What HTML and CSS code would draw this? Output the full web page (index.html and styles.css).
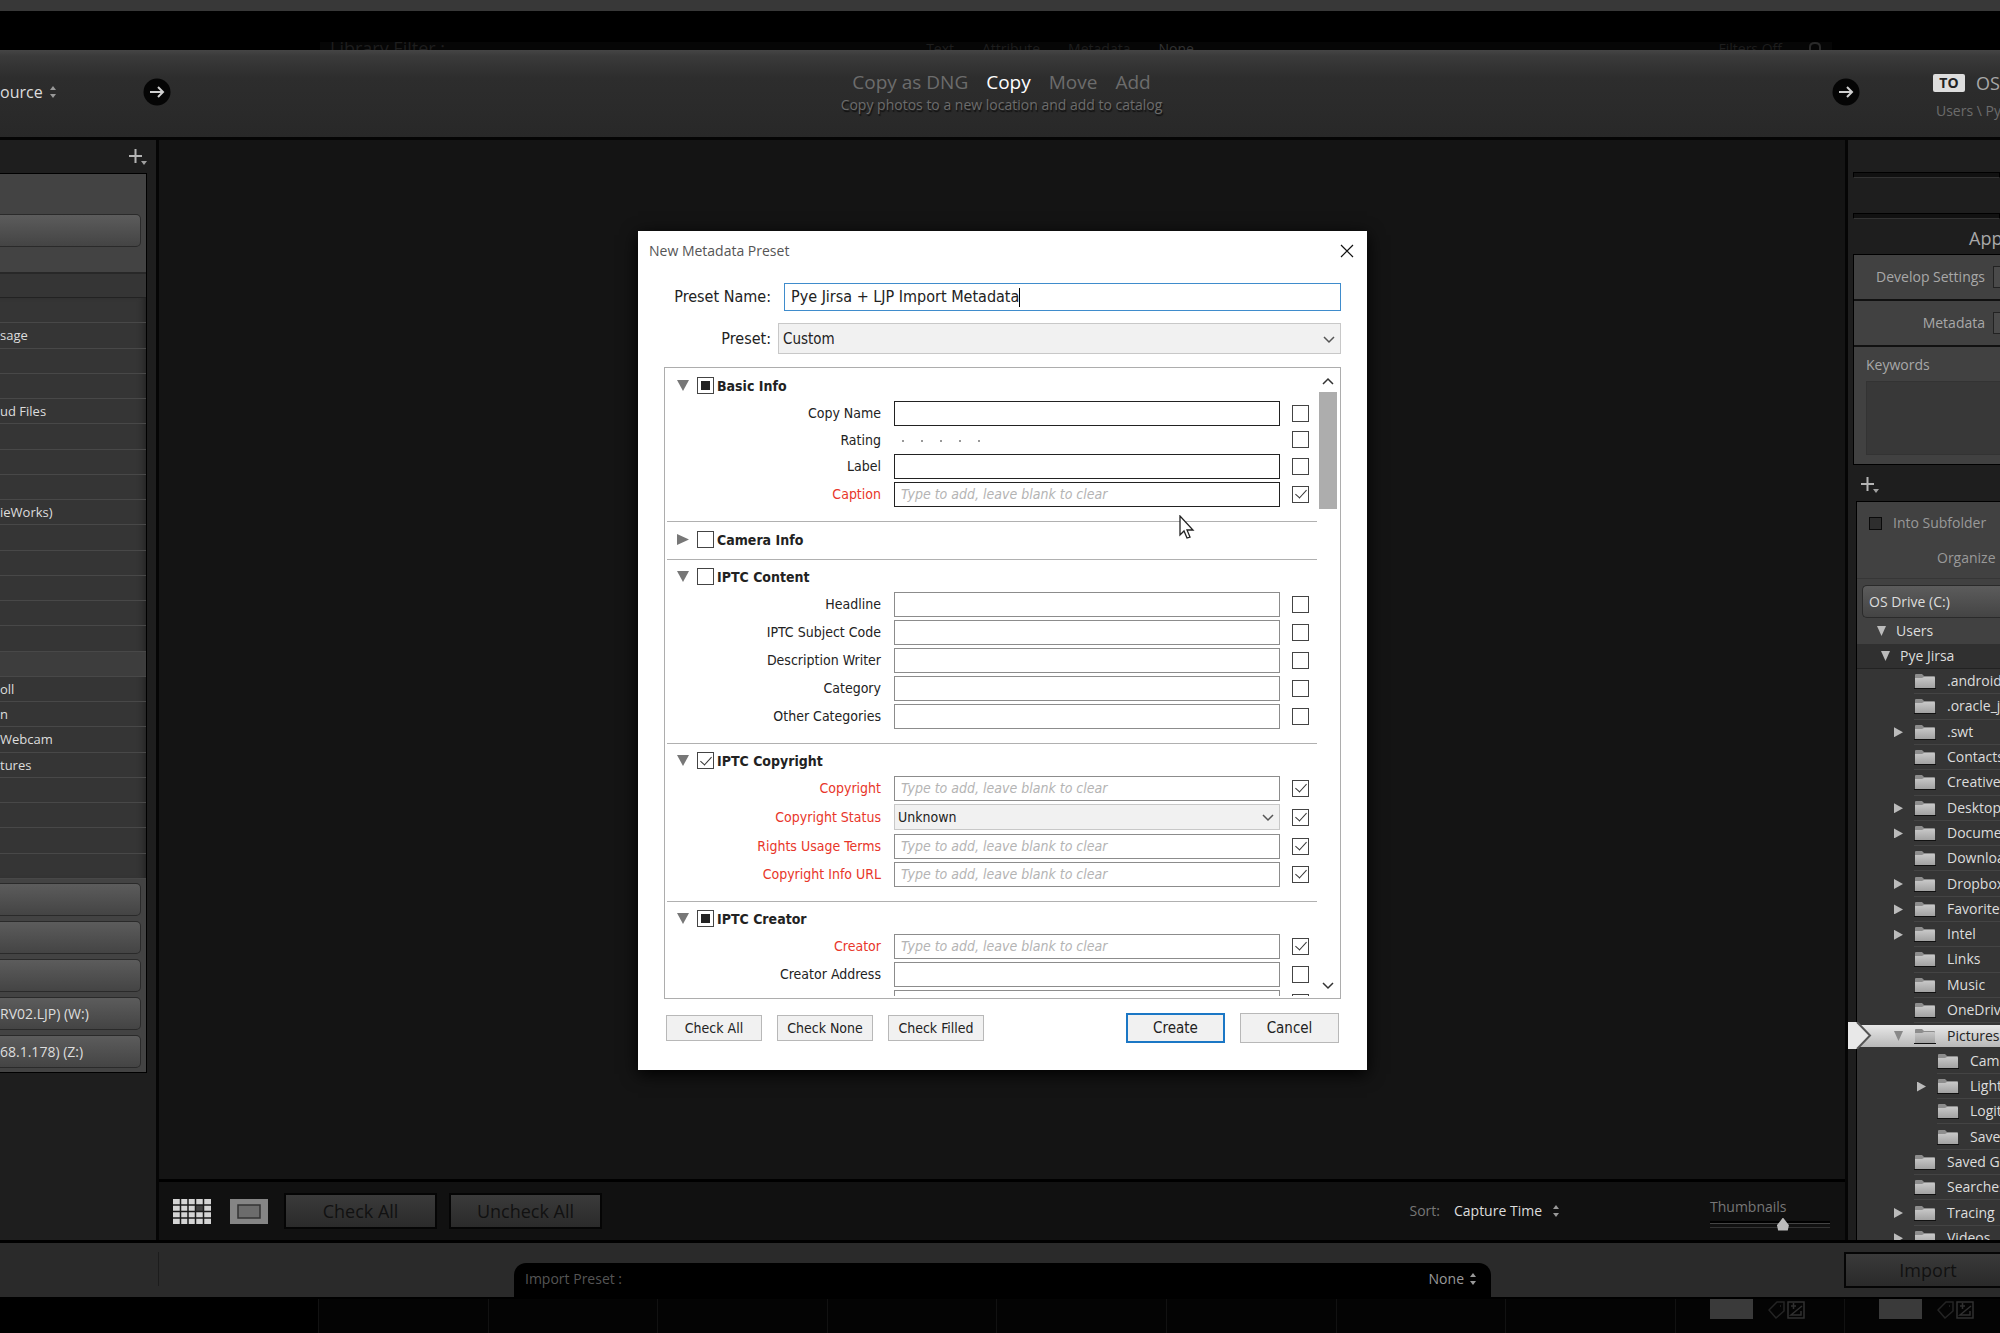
FILE: index.html
```html
<!DOCTYPE html>
<html lang="en">

<head>
    <meta charset="UTF-8">
    <meta name="viewport" content="width=device-width, initial-scale=1.0">
    <title>New Metadata Preset</title>
    <link rel="stylesheet" href="styles.css">
</head>

<body>
    <!-- shared icons -->
    <svg class="defs" width="0" height="0">
        <defs>
            <linearGradient id="fold" x1="0" y1="0" x2="0" y2="1">
                <stop offset="0" stop-color="#c8c8c8" />
                <stop offset="1" stop-color="#a2a2a2" />
            </linearGradient>
        </defs>
        <symbol id="folder" viewBox="0 0 22 16">
            <path d="M1 15V2q0-1 1-1h6l2 2h10q1 0 1 1v11z" fill="#8d8d8d" />
            <path d="M1 15V5h7l2-1h10q1 0 1 1v10z" fill="url(#fold)" />
            <path d="M0 15.500h22" stroke="#111" />
        </symbol>
        <symbol id="updown" viewBox="0 0 8 12">
            <path d="M4 0l3 4H1zM4 12L1 8h6z" fill="currentColor" />
        </symbol>
        <symbol id="plus" viewBox="0 0 20 18">
            <path d="M7.500 1v14M1 8h13" stroke="#b4b4b4" stroke-width="2" />
            <path d="M13 13h6l-3 4z" fill="#a0a0a0" />
        </symbol>
        <symbol id="go" viewBox="0 0 28 28">
            <circle cx="14" cy="14" r="13.500" fill="#050505" />
            <path d="M7 14h13M15 9l5 5-5 5" fill="none" stroke="#d0d0d0" stroke-width="2" />
        </symbol>
        <symbol id="chevron" viewBox="0 0 12 8">
            <path d="M1 1l5 5 5-5" fill="none" stroke="currentColor" stroke-width="1.500" />
        </symbol>
        <symbol id="tag" viewBox="0 0 38 20">
            <path d="M1 11L9 3h7v9l-8 7zM12 7h1" fill="none" stroke="#242424" stroke-width="1.500" />
            <path d="M20 3h16v16H20zM23 7h5M25.500 4v6M34 7L23 16h10v-4" fill="none" stroke="#303030" stroke-width="1.500" />
        </symbol>
    </svg>

    <div class="titlestrip"></div>
    <div class="backdrop">
        <div class="filterbar">
            <span class="filter-title">Library Filter :</span>
            <div class="filter-tabs">
                <span>Text</span>
                <span>Attribute</span>
                <span>Metadata</span>
                <span class="on">None</span>
            </div>
            <div class="filter-off">
                <span>Filters Off</span>
                <svg width="14" height="8" viewBox="0 0 14 8"><path d="M2 8V5q0-4 5-4t5 4v3" fill="none" stroke="#2a2a2a" stroke-width="2" /></svg>
            </div>
        </div>
    </div>

    <header class="header">
        <div class="header-left">
            <button class="source">ource <svg class="updown"><use href="#updown" /></svg></button>
            <svg class="go"><use href="#go" /></svg>
        </div>
        <div class="modes">
            <nav>
                <a href="#">Copy as DNG</a>
                <a href="#" class="on">Copy</a>
                <a href="#">Move</a>
                <a href="#">Add</a>
            </nav>
            <p>Copy photos to a new location and add to catalog</p>
        </div>
        <div class="header-right">
            <svg class="go"><use href="#go" /></svg>
            <div class="dest">
                <div class="dest-name"><b>TO</b><span>OS</span></div>
                <div class="dest-path">Users \ Py</div>
            </div>
        </div>
    </header>

    <main class="main">
        <aside class="left">
            <div class="left-head"><svg class="plus"><use href="#plus" /></svg></div>
            <div class="left-box">
                <div class="left-top"><button class="drive"></button></div>
                <div class="left-user"></div>
                <ul class="left-list">
                    <li></li>
                    <li>sage</li>
                    <li></li>
                    <li></li>
                    <li>ud Files</li>
                    <li></li>
                    <li></li>
                    <li></li>
                    <li>ieWorks)</li>
                    <li></li>
                    <li></li>
                    <li></li>
                    <li></li>
                    <li></li>
                    <li class="lit"></li>
                    <li>oll</li>
                    <li>n</li>
                    <li>Webcam</li>
                    <li>tures</li>
                    <li></li>
                    <li></li>
                    <li></li>
                    <li></li>
                </ul>
                <div class="left-drives">
                    <button class="drive"></button>
                    <button class="drive"></button>
                    <button class="drive"></button>
                    <button class="drive">RV02.LJP) (W:)</button>
                    <button class="drive">68.1.178) (Z:)</button>
                </div>
            </div>
        </aside>

        <section class="center">
            <div class="preview"></div>
            <div class="toolbar">
                <button class="view" aria-label="Grid">
                    <svg width="38" height="25" viewBox="0 0 38 25">
                        <path d="M0 0h38v25H0z" fill="#d4d4d4" />
                        <path d="M23 6h7v6h-7z" fill="#444" />
                        <path d="M7.500 0v25M15 0v25M22.500 0v25M30.500 0v25M0 6h38M0 12.500h38M0 19h38" stroke="#1a1a1a" stroke-width="1.500" />
                    </svg>
                </button>
                <button class="view" aria-label="Loupe">
                    <svg width="38" height="25" viewBox="0 0 38 25">
                        <path d="M0 0h38v25H0z" fill="#858585" />
                        <path d="M8 6h22v13H8z" fill="#6c6c6c" stroke="#333" stroke-width="1.500" />
                    </svg>
                </button>
                <button class="dark">Check All</button>
                <button class="dark">Uncheck All</button>
                <div class="sort">
                    <span>Sort:</span>
                    <button>Capture Time <svg class="updown"><use href="#updown" /></svg></button>
                </div>
                <div class="thumbs">
                    <label for="thumbs">Thumbnails</label>
                    <input type="range" id="thumbs" min="0" max="100" value="62">
                </div>
            </div>
        </section>

        <aside class="right">
            <div class="groove first"></div>
            <div class="groove"></div>
            <h2>App</h2>
            <div class="apply">
                <div class="apply-row"><span>Develop Settings</span><i></i></div>
                <div class="apply-row"><span>Metadata</span><i></i></div>
                <div class="apply-keys">
                    <label for="keywords">Keywords</label>
                    <textarea id="keywords"></textarea>
                </div>
            </div>
            <div class="right-head"><svg class="plus"><use href="#plus" /></svg></div>
            <div class="tree">
                <div class="tree-opts">
                    <label><input type="checkbox"> Into Subfolder</label>
                    <span>Organize</span>
                </div>
                <button class="drive">OS Drive (C:)</button>
                <div class="node users"><i class="tri down"></i>Users</div>
                <div class="node pye"><i class="tri down"></i>Pye Jirsa</div>
                <ul class="folders">
                    <li><i class="tri none"></i><span><svg><use href="#folder" /></svg>.android</span></li>
                    <li><i class="tri none"></i><span><svg><use href="#folder" /></svg>.oracle_ji</span></li>
                    <li><i class="tri"></i><span><svg><use href="#folder" /></svg>.swt</span></li>
                    <li><i class="tri none"></i><span><svg><use href="#folder" /></svg>Contacts</span></li>
                    <li><i class="tri none"></i><span><svg><use href="#folder" /></svg>Creative</span></li>
                    <li><i class="tri"></i><span><svg><use href="#folder" /></svg>Desktop</span></li>
                    <li><i class="tri"></i><span><svg><use href="#folder" /></svg>Documen</span></li>
                    <li><i class="tri none"></i><span><svg><use href="#folder" /></svg>Downloa</span></li>
                    <li><i class="tri"></i><span><svg><use href="#folder" /></svg>Dropbox</span></li>
                    <li><i class="tri"></i><span><svg><use href="#folder" /></svg>Favorites</span></li>
                    <li><i class="tri"></i><span><svg><use href="#folder" /></svg>Intel</span></li>
                    <li><i class="tri none"></i><span><svg><use href="#folder" /></svg>Links</span></li>
                    <li><i class="tri none"></i><span><svg><use href="#folder" /></svg>Music</span></li>
                    <li><i class="tri none"></i><span><svg><use href="#folder" /></svg>OneDrive</span></li>
                    <li class="selected">
                        <svg class="pointer" width="24" height="27" viewBox="0 0 24 27"><path d="M0 0h9l14 13.500L9 27H0z" fill="#e8e8e8" /><path d="M9 0l13 13.500L9 27" fill="none" stroke="#555" stroke-width="2" /></svg>
                        <i class="tri down"></i><span><svg><use href="#folder" /></svg>Pictures</span>
                    </li>
                    <li class="sub"><i class="tri none"></i><span><svg><use href="#folder" /></svg>Came</span></li>
                    <li class="sub"><i class="tri"></i><span><svg><use href="#folder" /></svg>Light</span></li>
                    <li class="sub"><i class="tri none"></i><span><svg><use href="#folder" /></svg>Logit</span></li>
                    <li class="sub"><i class="tri none"></i><span><svg><use href="#folder" /></svg>Save</span></li>
                    <li><i class="tri none"></i><span><svg><use href="#folder" /></svg>Saved Ga</span></li>
                    <li><i class="tri none"></i><span><svg><use href="#folder" /></svg>Searches</span></li>
                    <li><i class="tri"></i><span><svg><use href="#folder" /></svg>Tracing</span></li>
                    <li><i class="tri"></i><span><svg><use href="#folder" /></svg>Videos</span></li>
                </ul>
            </div>
        </aside>
    </main>

    <footer class="footer">
        <div class="footer-side"></div>
        <div class="preset-tab">
            <span>Import Preset :</span>
            <button>None <svg class="updown"><use href="#updown" /></svg></button>
        </div>
        <button class="dark import">Import</button>
    </footer>
    <div class="filmstrip">
        <div class="cell"></div>
        <div class="cell"></div>
        <div class="cell"></div>
        <div class="cell"></div>
        <div class="cell"></div>
        <div class="cell"></div>
        <div class="cell"></div>
        <div class="cell"></div>
        <div class="cell"><i></i><svg><use href="#tag" /></svg></div>
        <div class="cell"><i></i><svg><use href="#tag" /></svg></div>
    </div>

    <!-- dialog -->
    <div class="overlay">
        <form class="dialog">
            <div class="dialog-title">
                <span>New Metadata Preset</span>
                <button type="button" class="close" aria-label="Close">
                    <svg width="14" height="14" viewBox="0 0 14 14"><path d="M1 1l12 12M13 1L1 13" stroke="#111" stroke-width="1.200" /></svg>
                </button>
            </div>

            <div class="line">
                <label for="name">Preset Name:</label>
                <div class="namebox"><input type="text" id="name" value="Pye Jirsa + LJP Import Metadata"><i></i></div>
            </div>
            <div class="line second">
                <label for="preset">Preset:</label>
                <div class="select">
                    <select id="preset"><option>Custom</option></select>
                    <svg><use href="#chevron" /></svg>
                </div>
            </div>

            <div class="list">
                <div class="sections">
                    <fieldset class="basic">
                        <div class="group"><i class="tri down"></i><label><input type="checkbox" class="mixed">Basic Info</label></div>
                        <div class="row"><label for="f1">Copy Name</label><input type="text" id="f1"><input type="checkbox" aria-label="Copy Name"></div>
                        <div class="row rating"><span>Rating</span><div class="stars"><i></i><i></i><i></i><i></i><i></i></div><input type="checkbox" aria-label="Rating"></div>
                        <div class="row"><label for="f2">Label</label><input type="text" id="f2"><input type="checkbox" aria-label="Label"></div>
                        <div class="row red"><label for="f3">Caption</label><input type="text" id="f3" placeholder="Type to add, leave blank to clear"><input type="checkbox" checked aria-label="Caption"></div>
                    </fieldset>
                    <fieldset class="closed">
                        <div class="group"><i class="tri"></i><label><input type="checkbox">Camera Info</label></div>
                    </fieldset>
                    <fieldset>
                        <div class="group"><i class="tri down"></i><label><input type="checkbox">IPTC Content</label></div>
                        <div class="row"><label for="f4">Headline</label><input type="text" id="f4"><input type="checkbox" aria-label="Headline"></div>
                        <div class="row"><label for="f5">IPTC Subject Code</label><input type="text" id="f5"><input type="checkbox" aria-label="IPTC Subject Code"></div>
                        <div class="row"><label for="f6">Description Writer</label><input type="text" id="f6"><input type="checkbox" aria-label="Description Writer"></div>
                        <div class="row"><label for="f7">Category</label><input type="text" id="f7"><input type="checkbox" aria-label="Category"></div>
                        <div class="row"><label for="f8">Other Categories</label><input type="text" id="f8"><input type="checkbox" aria-label="Other Categories"></div>
                    </fieldset>
                    <fieldset>
                        <div class="group"><i class="tri down"></i><label><input type="checkbox" checked>IPTC Copyright</label></div>
                        <div class="row red"><label for="f9">Copyright</label><input type="text" id="f9" placeholder="Type to add, leave blank to clear"><input type="checkbox" checked aria-label="Copyright"></div>
                        <div class="row red status">
                            <label for="f10">Copyright Status</label>
                            <div class="select">
                                <select id="f10"><option>Unknown</option></select>
                                <svg><use href="#chevron" /></svg>
                            </div>
                            <input type="checkbox" checked aria-label="Copyright Status">
                        </div>
                        <div class="row red"><label for="f11">Rights Usage Terms</label><input type="text" id="f11" placeholder="Type to add, leave blank to clear"><input type="checkbox" checked aria-label="Rights Usage Terms"></div>
                        <div class="row red"><label for="f12">Copyright Info URL</label><input type="text" id="f12" placeholder="Type to add, leave blank to clear"><input type="checkbox" checked aria-label="Copyright Info URL"></div>
                    </fieldset>
                    <fieldset>
                        <div class="group"><i class="tri down"></i><label><input type="checkbox" class="mixed">IPTC Creator</label></div>
                        <div class="row red"><label for="f13">Creator</label><input type="text" id="f13" placeholder="Type to add, leave blank to clear"><input type="checkbox" checked aria-label="Creator"></div>
                        <div class="row"><label for="f14">Creator Address</label><input type="text" id="f14"><input type="checkbox" aria-label="Creator Address"></div>
                        <div class="row"><span></span><input type="text" aria-label="Creator City"><input type="checkbox" aria-label="Use Creator City"></div>
                    </fieldset>
                </div>
                <div class="scroll">
                    <svg class="up"><use href="#chevron" /></svg>
                    <div class="thumb"></div>
                    <svg class="dn"><use href="#chevron" /></svg>
                </div>
            </div>

            <div class="actions">
                <button type="button">Check All</button>
                <button type="button">Check None</button>
                <button type="button">Check Filled</button>
                <button type="submit" class="big create">Create</button>
                <button type="button" class="big">Cancel</button>
            </div>

            <svg class="cursor" width="16" height="25" viewBox="0 0 16 25">
                <path d="M1 1v19l4-4 3 7 3-1-3-7h6z" fill="#fff" stroke="#222" stroke-width="1.300" />
            </svg>
        </form>
    </div>
</body>

</html>
```
FILE: styles.css
```css
* {
    margin: 0;
    padding: 0;
    box-sizing: border-box;
    list-style: none;
}

body {
    height: 100vh;
    display: flex;
    flex-direction: column;
    overflow: hidden;
    position: relative;
    background: #000;
    color: #ddd;
    font: 14px/20px "Open Sans", "Noto Sans", sans-serif;
    white-space: nowrap;
}

button,
input,
select,
textarea {
    font: inherit;
    color: inherit;
    border: 0;
    border-radius: 0;
    outline: none;
    background: none;
    appearance: none;
}

a {
    color: inherit;
    text-decoration: none;
}

.defs {
    position: absolute;
}

.updown {
    width: 8px;
    height: 12px;
    color: #999;
}

.plus {
    width: 20px;
    height: 18px;
}

.go {
    width: 28px;
    height: 28px;
}

/* top */
.titlestrip {
    height: 11px;
    background: #383838;
}

.backdrop {
    height: 39px;
    padding: 31px 168px 0 320px;
}

.filterbar {
    height: 8px;
    overflow: hidden;
    display: grid;
    grid-template-columns: 1fr auto 1fr;
    padding: 0 10px;
    background: #060606;
    color: #1e1e1e;
    line-height: 14px;
}

.filter-title {
    font-size: 18px;
    line-height: 12px;
}

.filter-tabs {
    display: flex;
    gap: 28px;
    margin-right: 32px;
}

.filter-tabs .on {
    color: #333;
}

.filter-off {
    display: flex;
    justify-content: flex-end;
    gap: 26px;
}

.header {
    height: 90px;
    display: flex;
    justify-content: space-between;
    background: linear-gradient(#454545, #3a3a3a 6px, #2d2d2d 28px, #282828);
    border-bottom: 3px solid #050505;
}

.header-left,
.header-right {
    width: 171px;
    display: flex;
    justify-content: space-between;
    padding-top: 28px;
}

.header-left .source {
    height: 28px;
    font-size: 16px;
    line-height: 28px;
    display: flex;
    align-items: center;
    gap: 6px;
}

.header-right {
    width: 168px;
    padding-top: 22px;
}

.header-right .go {
    margin-top: 6px;
}

.modes {
    padding-top: 19px;
    text-align: center;
    color: #6c6c6c;
}

.modes nav {
    display: flex;
    justify-content: center;
    gap: 18px;
    font-size: 19px;
    line-height: 26px;
}

.modes .on {
    color: #fff;
}

.modes p {
    line-height: 20px;
    text-shadow: 1px 2px 1px #111;
}

.dest {
    width: 67px;
}

.dest-name {
    display: flex;
    align-items: center;
    gap: 11px;
    height: 22px;
    font-size: 18px;
    color: #a8a8a8;
}

.dest-name b {
    width: 32px;
    height: 18px;
    border-radius: 2px;
    background: #ddd;
    color: #222;
    font-size: 14px;
    line-height: 18px;
    text-align: center;
}

.dest-path {
    padding: 7px 0 0 3px;
    color: #6c6c6c;
}

/* middle */
.main {
    flex: 1;
    min-height: 0;
    display: flex;
}

.left {
    width: 159px;
    background: #1e1e1e;
    border-right: 3px solid #050505;
}

.left-head {
    height: 33px;
    padding: 8px 0 0 128px;
}

.left-box {
    width: 147px;
    background: #434343;
    border: 1px solid #000;
    border-left: 0;
}

.drive {
    display: block;
    width: 141px;
    height: 33px;
    border: 1px solid #2a2a2a;
    border-left: 0;
    border-radius: 0 5px 5px 0;
    background: linear-gradient(#5c5c5c, #444);
    text-align: left;
}

.left-top {
    height: 98px;
    padding-top: 40px;
}

.left-user {
    height: 25px;
    background: #353535;
    border-top: 2px solid #282828;
}

.left-list {
    height: 582px;
    display: grid;
    grid-auto-rows: 1fr;
    background: #353535;
    border-top: 1px solid #222;
    box-shadow: inset -6px 0 6px -4px #222;
    font-size: 13px;
}

.left-list li {
    border-bottom: 1px solid #484848;
    line-height: 24px;
    overflow: hidden;
}

.left-list .lit {
    background: #3d3d3d;
}

.left-drives {
    display: grid;
    gap: 5px;
    padding: 4px 0;
}

.center {
    flex: 1;
    display: flex;
    flex-direction: column;
}

.preview {
    flex: 1;
    background: #141414;
}

.toolbar {
    height: 61px;
    display: flex;
    align-items: center;
    padding: 0 15px 0 14px;
    background: #111;
    border-top: 3px solid #000;
}

.view {
    width: 38px;
    height: 25px;
    margin-right: 19px;
}

.dark {
    width: 153px;
    height: 36px;
    border: 2px solid #050505;
    background: linear-gradient(#3a3a3a, #2a2a2a);
    color: #111;
    font-size: 18px;
    line-height: 28px;
}

.view + .dark {
    margin: 0 12px 0 -3px;
}

.sort {
    margin-left: auto;
    display: flex;
    gap: 14px;
    color: #777;
}

.sort button {
    color: #ddd;
    display: flex;
    align-items: center;
    gap: 10px;
}

.thumbs {
    width: 120px;
    margin-left: 150px;
    padding-top: 6px;
    color: #777;
}

.thumbs label {
    display: block;
}

.thumbs input {
    display: block;
    width: 120px;
    height: 14px;
    background: linear-gradient(#000, #000) 0 4px / 100% 2px no-repeat, linear-gradient(#444, #444) 0 6px / 100% 1px no-repeat, linear-gradient(#333, #333) 0 10px / 100% 1px no-repeat;
}

.thumbs input::-webkit-slider-thumb {
    appearance: none;
    width: 12px;
    height: 13px;
    background: #bbb;
    clip-path: polygon(50% 0, 100% 60%, 90% 100%, 10% 100%, 0 60%);
}

.right {
    width: 155px;
    overflow: hidden;
    background: #1e1e1e;
    border-left: 3px solid #050505;
}

.groove {
    height: 6px;
    margin: 35px 0 0 5px;
    background: #111;
    border: 1px solid #000;
    border-bottom-color: #333;
}

.groove.first {
    margin-top: 32px;
}

.right h2 {
    height: 35px;
    padding: 2px 0 0 121px;
    font-size: 18px;
    font-weight: normal;
    line-height: 34px;
    color: #a8a8a8;
}

.apply {
    margin-left: 5px;
    background: #414141;
    border: 1px solid #000;
    border-right: 0;
    color: #a8a8a8;
}

.apply-row {
    height: 46px;
    display: flex;
    align-items: center;
    justify-content: flex-end;
    gap: 8px;
    border-bottom: 2px solid #111;
}

.apply-row i {
    width: 7px;
    height: 22px;
    background: #4a4a4a;
    border: 1px solid #222;
    border-right: 0;
}

.apply-keys {
    height: 117px;
    padding: 8px 0 0 12px;
}

.apply-keys label,
.apply-keys textarea {
    display: block;
}

.apply-keys textarea {
    width: 100%;
    height: 74px;
    margin-top: 6px;
    resize: none;
    background: #383838;
    border: 1px solid #333;
    border-right: 0;
}

.right-head {
    height: 36px;
    padding: 11px 0 0 12px;
}

.tree {
    margin-left: 8px;
    background: #414141;
    border: 1px solid #000;
    border-right: 0;
}

.tree-opts {
    height: 77px;
    border-bottom: 1px solid #363636;
    color: #999;
}

.tree-opts label {
    display: flex;
    align-items: center;
    gap: 11px;
    padding: 11px 0 0 12px;
}

.tree-opts input {
    width: 13px;
    height: 13px;
    background: #2e2e2e;
    border: 1px solid #0a0a0a;
}

.tree-opts span {
    display: block;
    padding: 15px 0 0 80px;
}

.tree .drive {
    width: auto;
    min-width: 138px;
    margin: 6px 0 0 5px;
    padding-left: 6px;
    border: 1px solid #2a2a2a;
    border-right: 0;
    border-radius: 5px 0 0 5px;
}

.tri {
    flex: none;
    width: 9px;
    height: 10px;
    background: #bbb;
    clip-path: polygon(0 0, 100% 50%, 0 100%);
}

.tri.down {
    clip-path: polygon(0 0, 100% 0, 50% 100%);
}

.tri.none {
    background: none;
}

.node {
    height: 26px;
    display: flex;
    align-items: center;
    gap: 10px;
    padding-left: 20px;
}

.node.pye {
    height: 25px;
    padding-left: 24px;
    background: #303030;
    border-bottom: 1px solid #222;
}

.folders {
    height: 582px;
    display: grid;
    grid-auto-rows: 1fr;
    background: #353535;
}

.folders li {
    display: flex;
    align-items: center;
    gap: 11px;
    padding-left: 37px;
    position: relative;
}

.folders li.sub {
    padding-left: 60px;
}

.folders span {
    flex: 1;
    height: 100%;
    display: flex;
    align-items: center;
    gap: 11px;
    border-bottom: 1px solid #444;
    overflow: hidden;
}

.folders span svg {
    flex: none;
    width: 22px;
    height: 16px;
}

.folders .selected {
    background: linear-gradient(#353535 2px, #e8e8e8 2px, #b8b8b8 24px, #353535 24px);
    color: #222;
}

.folders .selected .tri {
    background: #888;
}

.folders .selected span {
    border: 0;
}

.pointer {
    position: absolute;
    left: -9px;
    top: -1px;
}

/* bottom */
.footer {
    height: 59px;
    display: flex;
    background: #2a2a2a;
    border-top: 3px solid #000;
    border-bottom: 2px solid #000;
}

.footer-side {
    width: 159px;
    height: 34px;
    margin: 9px 355px 0 0;
    border-right: 1px solid #1c1c1c;
}

.preset-tab {
    flex: 1;
    margin-top: 20px;
    display: flex;
    justify-content: space-between;
    align-items: center;
    padding: 0 14px 2px 11px;
    border-radius: 12px 12px 0 0;
    background: #000;
    color: #555;
}

.preset-tab button {
    color: #999;
    display: flex;
    align-items: center;
    gap: 5px;
}

.dark.import {
    width: 156px;
    margin: 9px 0 0 353px;
    padding-left: 10px;
    border-right: 0;
}

.filmstrip {
    height: 34px;
    margin: 0 -14px 0 318px;
    display: grid;
    grid-template-columns: repeat(10, 1fr);
    overflow: hidden;
}

.cell {
    display: flex;
    gap: 15px;
    padding-left: 34px;
    background: #040404;
    border-left: 1px solid #121212;
}

.cell i {
    width: 43px;
    height: 20px;
    background: #3a3a3a;
}

.cell svg {
    width: 38px;
    height: 20px;
}

/* dialog */
.overlay {
    position: absolute;
    inset: 0;
    display: flex;
    justify-content: center;
    align-items: flex-start;
    padding: 231px 0 0 5px;
}

.dialog {
    width: 729px;
    position: relative;
    padding: 0 26px 27px;
    background: #fff;
    color: #222;
    font: 14px/18px "DejaVu Sans Condensed", "Noto Sans", sans-serif;
    box-shadow: 0 4px 16px #000;
}

.dialog-title {
    display: flex;
    justify-content: space-between;
    align-items: center;
    height: 39px;
    margin: 0 -13px 0 -15px;
    font-family: "Open Sans", "Noto Sans", sans-serif;
    color: #555;
}

.close {
    width: 14px;
    height: 14px;
}

.line {
    display: grid;
    grid-template-columns: 107px 1fr;
    gap: 13px;
    align-items: center;
    height: 28px;
    margin-top: 13px;
    font-size: 16px;
}

.line label {
    text-align: right;
}

.line.second {
    gap: 7px;
    height: 31px;
    margin-top: 12px;
}

.namebox {
    height: 28px;
    display: flex;
    align-items: center;
    padding-left: 6px;
    border: 1px solid #3f8ccc;
}

.namebox input {
    field-sizing: content;
}

.namebox i {
    width: 1px;
    height: 19px;
    background: #000;
}

.select {
    height: 31px;
    position: relative;
}

.select select {
    width: 100%;
    height: 100%;
    padding-left: 4px;
    background: #f1f1f1;
    border: 1px solid #c8c8c8;
}

.line .select {
    font-size: 15px;
}

.select svg {
    position: absolute;
    right: 6px;
    top: 50%;
    width: 12px;
    height: 8px;
    margin-top: -3px;
    color: #555;
}

.list {
    height: 632px;
    margin-top: 13px;
    display: flex;
    border: 1px solid #adadad;
    overflow: hidden;
}

.sections {
    flex: 1;
    padding: 1px 0 0 2px;
    overflow: hidden;
    border-bottom: 2px solid #fff;
}

fieldset {
    border: 0;
    border-bottom: 1px solid #b0b0b0;
    padding: 3px 0 13px;
}

fieldset.closed {
    padding: 4px 0 6px;
}

.group {
    height: 27px;
    display: flex;
    align-items: center;
    gap: 8px;
    padding-left: 10px;
    font-weight: bold;
}

.group label {
    display: flex;
    align-items: center;
    gap: 3px;
}

.group .tri {
    width: 12px;
    height: 11px;
    background: #777;
}

.dialog [type=checkbox] {
    width: 17px;
    height: 17px;
    border: 1px solid #444;
    display: grid;
    place-items: center;
}

.dialog [type=checkbox]:checked::after {
    content: "";
    width: 5px;
    height: 10px;
    margin-bottom: 3px;
    border: solid #333;
    border-width: 0 1px 1px 0;
    transform: rotate(42deg);
}

.dialog .mixed::after {
    content: "";
    width: 9px;
    height: 9px;
    background: #222;
}

.row {
    height: 28px;
    display: grid;
    grid-template-columns: 214px 1fr 17px;
    align-items: center;
    padding-right: 8px;
}

.row > :first-child {
    text-align: right;
}

.row > :nth-child(2) {
    margin: 0 12px 0 13px;
}

.row.red label {
    color: #e8362a;
}

.row [type=text] {
    height: 25px;
    padding: 0 6px;
    border: 1px solid #8c8c8c;
}

.basic .row [type=text] {
    border-color: #222;
}

.row ::placeholder {
    color: #b4b4b4;
    font-style: italic;
}

.row.rating {
    height: 25px;
}

.row.status {
    height: 30px;
}

.status .select {
    height: 26px;
}

.status select {
    padding-left: 3px;
}

.stars {
    display: flex;
    gap: 17px;
    padding: 3px 0 0 8px;
}

.stars i {
    width: 2px;
    height: 2px;
    background: #999;
}

.scroll {
    width: 23px;
    display: flex;
    flex-direction: column;
    align-items: center;
    padding: 9px 2px 8px 0;
}

.scroll svg {
    width: 12px;
    height: 8px;
    color: #333;
}

.scroll .up {
    transform: rotate(180deg);
}

.scroll .dn {
    margin-top: auto;
}

.thumb {
    width: 18px;
    height: 117px;
    margin-top: 7px;
    background: #adadad;
}

.actions {
    display: flex;
    align-items: center;
    gap: 15px;
    height: 30px;
    margin: 14px 0 0 2px;
    padding-right: 2px;
}

.actions button {
    width: 96px;
    height: 26px;
    background: #f1f1f1;
    border: 1px solid #b8b8b8;
}

.actions .big {
    width: 99px;
    height: 30px;
    font-size: 15px;
}

.actions .create {
    margin-left: auto;
    border: 2px solid #1b77c5;
}

.cursor {
    position: absolute;
    left: 541px;
    top: 284px;
}
```
